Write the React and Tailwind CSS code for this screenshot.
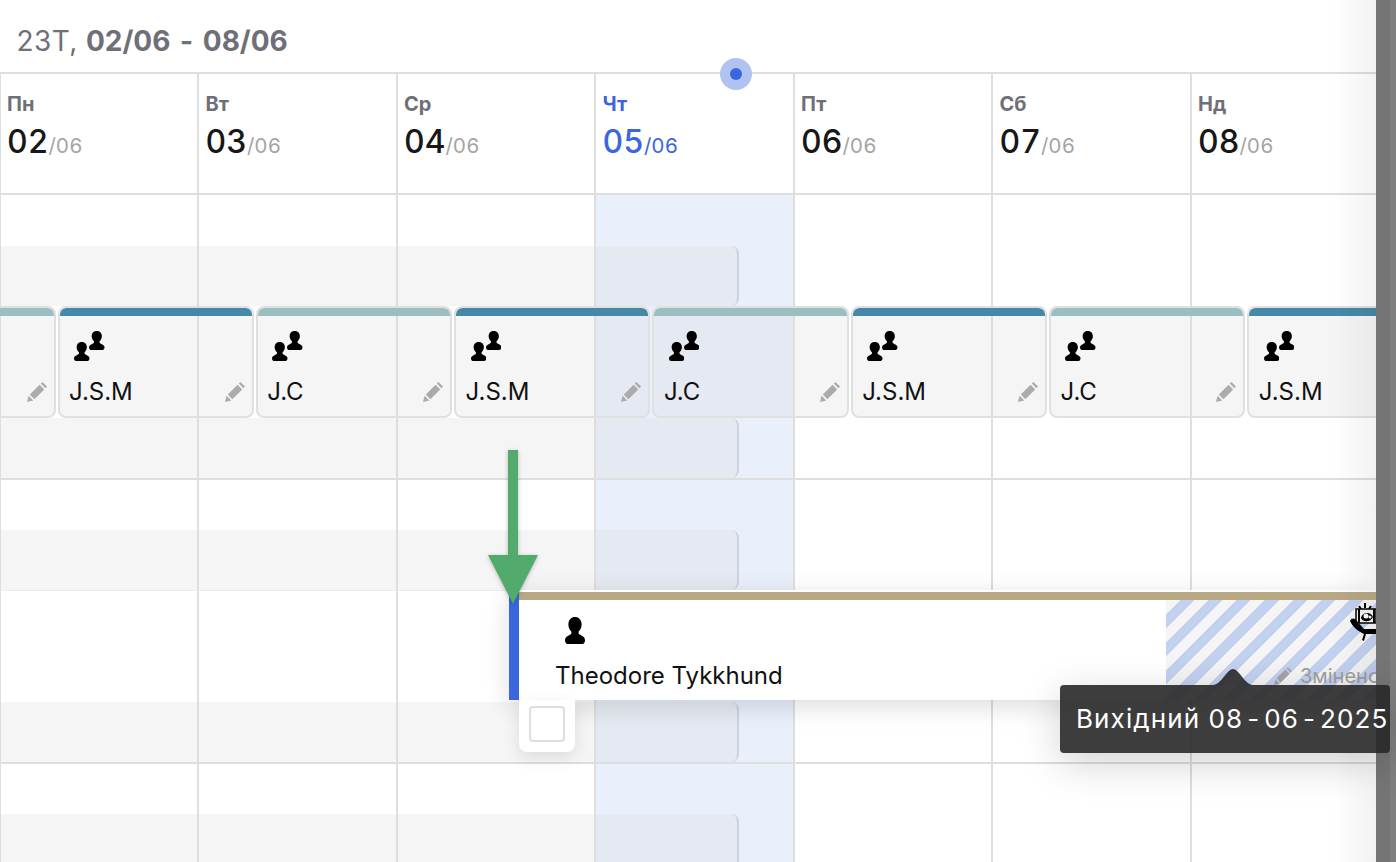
const days = [
  ["Пн", "02"], ["Вт", "03"], ["Ср", "04"], ["Чт", "05"], ["Пт", "06"], ["Сб", "07"], ["Нд", "08"],
];
const cards = [
  ["", "bg-[#9bbfc0]"], ["J.S.M", "bg-[#4788a8]"], ["J.C", "bg-[#9bbfc0]"], ["J.S.M", "bg-[#4788a8]"],
  ["J.C", "bg-[#9bbfc0]"], ["J.S.M", "bg-[#4788a8]"], ["J.C", "bg-[#9bbfc0]"], ["J.S.M", "bg-[#4788a8]"],
];

function Person({ className }) {
  return (
    <svg viewBox="0 0 20 27" preserveAspectRatio="none" className={className} fill="currentColor">
      <path d="M10 0C6.500 0 3.400 2.500 3.400 7.500c0 3 1.200 5.500 3 7V16c0 1-.9 1.600-2.400 2.300C1.500 19.400 0 20.800 0 23.400 0 25.800 1.500 27 3.500 27h13c2 0 3.500-1.200 3.500-3.600 0-2.600-1.500-4-4-5.100-1.500-.7-2.400-1.300-2.400-2.300v-1.500c1.800-1.500 3-4 3-7C16.600 2.500 13.500 0 10 0z" />
    </svg>
  );
}

function Pencil({ className }) {
  return (
    <svg viewBox="0 0 20 20" className={className} fill="currentColor">
      <path d="M0 20l1.600-6.200 4.600 4.600z" />
      <path d="M2.800 12.600L12.600 2.800l4.600 4.600-9.800 9.800z" />
      <path d="M13.800 1.600L15.400 0 20 4.600l-1.600 1.600z" />
    </svg>
  );
}

function Duo() {
  return (
    <div className="relative h-[30px] w-[31px]">
      <Person className="absolute left-0 top-[11px] h-[19px] w-[15.500px] text-black" />
      <Person className="absolute left-[15px] top-0 h-[19px] w-[15.500px] text-black" />
    </div>
  );
}

function GrayRow() {
  return (
    <div className="h-[60px]">
      <div className="h-full w-[739px] rounded-r-lg border-r-2 border-[#c9ccd8]/80 bg-[#dfdfdf]/[0.3]" />
    </div>
  );
}

function Beach({ className }) {
  return (
    <svg viewBox="0 0 30 38" className={className}>
      <path d="M9 3l2 3M15 0v5M21 3l-2 3" stroke="#000" strokeWidth="2" fill="none" />
      <rect x="6" y="6" width="20" height="14" fill="#f5f5f5" stroke="#000" strokeWidth="1.500" />
      <path d="M9 6v14M24 6v14" stroke="#000" strokeWidth="2" />
      <path d="M11 15c1-6 10-7 12-1-2 5-10 6-12 1z" fill="#000" />
      <circle cx="16" cy="13" r="2.500" fill="#fff" />
      <circle cx="20" cy="14" r="1.500" fill="#fff" />
      <path d="M0 18c1-3 4-3 5-2l9 10h16v5H16l-2 7-2-1 2-6-2-1C8 28 2 23 0 18z" fill="#000" />
    </svg>
  );
}

export default function App() {
  return (
    <div className="relative flex h-[862px] w-[1396px] overflow-hidden bg-white font-['Inter',sans-serif]">
      <main className="relative h-full w-[1376px] overflow-hidden">
        <h1 className="flex h-[72px] items-start pl-[16.500px] pt-[24px] text-[28px] leading-[34px] tracking-[0.4px] text-[#6f6f78]">
          <span>23Т,&nbsp;</span>
          <span className="font-bold tracking-normal">02/06<span className="mx-[3px]"> - </span>08/06</span>
        </h1>

        <div className="-ml-[1.500px] grid h-[123px] w-[1389.500px] grid-cols-7 border-y-2 border-[#dedede]">
          {days.map(([d, n], i) => (
            <div key={d} className="h-full border-l-2 border-[#dedede] pl-[6.500px] pt-[19px]">
              <div className={`text-[20px] font-bold leading-[22px] ${i === 3 ? "text-[#3b66dd]" : "text-[#6f6f78]"}`}>{d}</div>
              <div className={`mt-[8px] text-[32px] font-medium leading-[38px] tabular-nums ${i === 3 ? "text-[#3b66dd]" : "text-[#171717]"}`}>
                {n}<span className={`text-[20.500px] font-normal ${i === 3 ? "text-[#3b66dd]" : "text-[#a5a5a5]"}`}>/06</span>
              </div>
            </div>
          ))}
        </div>

        <div className="relative">
          <div className="pointer-events-none absolute inset-y-0 -left-[1.500px] grid w-[1389.500px] grid-cols-7">
            {days.map(([d], i) => (
              <div key={d} className={`border-l-2 border-[#dedede] ${i === 3 ? "bg-[#e9effb]" : ""}`} />
            ))}
          </div>

          <div className="relative">
            <div className="h-[51px]" />
            <GrayRow />

            <div className="-ml-[140.800px] flex h-[112px] w-[1600px]">
              {cards.map(([name, color], i) => (
                <div key={i} className="relative mr-[2px] flex h-[112px] w-[196.300px] shrink-0 flex-col overflow-hidden rounded-lg border-2 border-[#e0e0e0] bg-[#dfdfdf]/[0.3]">
                  <div className={`h-[8px] shrink-0 rounded-t-md ${color}`} />
                  <div className="pl-[14.500px] pt-[15px]"><Duo /></div>
                  <div className="pl-[9.500px] pt-[16px] text-[24px] leading-[29px] text-[#111]">{name}</div>
                  <Pencil className="absolute bottom-[14px] right-[7px] h-[20px] w-[20px] text-[#ababab]" />
                </div>
              ))}
            </div>

            <GrayRow />
            <div className="h-[52px] border-t-2 border-[#dedede]" />
            <GrayRow />
            <div className="h-[112px] border-t border-[#ececec]" />
            <GrayRow />
            <div className="h-[52px] border-t-2 border-[#dedede]" />
            <GrayRow />
          </div>

          <div className="absolute left-[509px] top-[395px] z-30 h-[110px] w-[867px]">
            <div className="relative h-[110px] shadow-[0_6px_24px_rgba(0,0,0,0.14)]">
              <div className="flex h-full">
                <div className="h-full w-[10px] shrink-0 bg-[#3b66dd]" />
                <div className="flex min-w-0 flex-1 flex-col">
                  <div className="h-[2px] shrink-0 bg-white" />
                  <div className="h-[8px] shrink-0 bg-[#b8a884]" />
                  <div className="flex flex-1 bg-white">
                    <div className="w-[647px] shrink-0 pl-[37px] pt-[17px]">
                      <Person className="ml-[9px] h-[27px] w-[20px] text-black" />
                      <div className="-ml-[1px] mt-[17px] text-[24px] leading-[29px] text-[#111]">Theodore Tykkhund</div>
                    </div>
                    <div className="relative flex-1 overflow-hidden bg-[repeating-linear-gradient(135deg,#f5f5f5_0,#f5f5f5_10px,#c3d1f1_10px,#c3d1f1_20px)]">
                      <Beach className="absolute -right-[4px] top-[3px] h-[38px] w-[30px]" />
                      <div className="absolute left-[108px] top-[64px] flex w-[120px] items-center gap-[8px] text-[20px] leading-[24px] text-[#a0a0a0]">
                        <Pencil className="h-[18px] w-[18px] shrink-0 text-[#a5a5a5]" />
                        <span>Змінено</span>
                      </div>
                    </div>
                  </div>
                </div>
              </div>
              <div className="absolute left-[10px] top-[110px] flex h-[52px] w-[56px] justify-center rounded-b-lg bg-white pt-[6px] shadow-[0_6px_16px_rgba(0,0,0,0.1)]">
                <div className="h-[36px] w-[36px] rounded-[4px] border-2 border-[#dedede] bg-white" />
              </div>
            </div>
          </div>
        </div>

        <div className="pointer-events-none absolute right-0 top-0 z-[35] h-full w-[44px] bg-gradient-to-r from-transparent to-black/[0.05]" />
      </main>

      <div className="relative z-40 flex h-full w-[20px] shrink-0">
        <div className="w-[14px] bg-[#757575]" />
        <div className="w-[6px] bg-[#7f7f7f]" />
      </div>

      <div className="absolute left-[720px] top-[58px] z-40 flex h-[32px] w-[32px] items-center justify-center rounded-full bg-[#b0c2f0]">
        <div className="h-[12px] w-[12px] rounded-full bg-[#3b66dd]" />
      </div>

      <svg className="absolute left-[484px] top-[446px] z-40 h-[164px] w-[58px] drop-shadow-[0_1px_2px_rgba(0,0,0,0.25)]" viewBox="0 0 58 164">
        <path d="M24 4h10v105h20l-25 49L4 109h20z" fill="#52ab6d" />
      </svg>

      <div className="absolute left-[1060px] top-[685px] z-50 flex h-[68px] w-[330px] items-center whitespace-nowrap rounded-[4px] bg-[#282828]/90 pl-[16px] text-[26px] leading-[32px] tracking-[1.100px] text-white shadow-[0_10px_40px_rgba(0,0,0,0.18)]">
        Вихідний 08<span className="mx-[4px]">-</span>06<span className="mx-[4px]">-</span>2025
      </div>
      <svg className="absolute left-[1213px] top-[669px] z-50 h-[16px] w-[40px]" viewBox="0 0 40 16">
        <path d="M0 16C8 16 14 0 20 0s12 16 20 16z" fill="#282828" fillOpacity="0.9" />
      </svg>
    </div>
  );
}
